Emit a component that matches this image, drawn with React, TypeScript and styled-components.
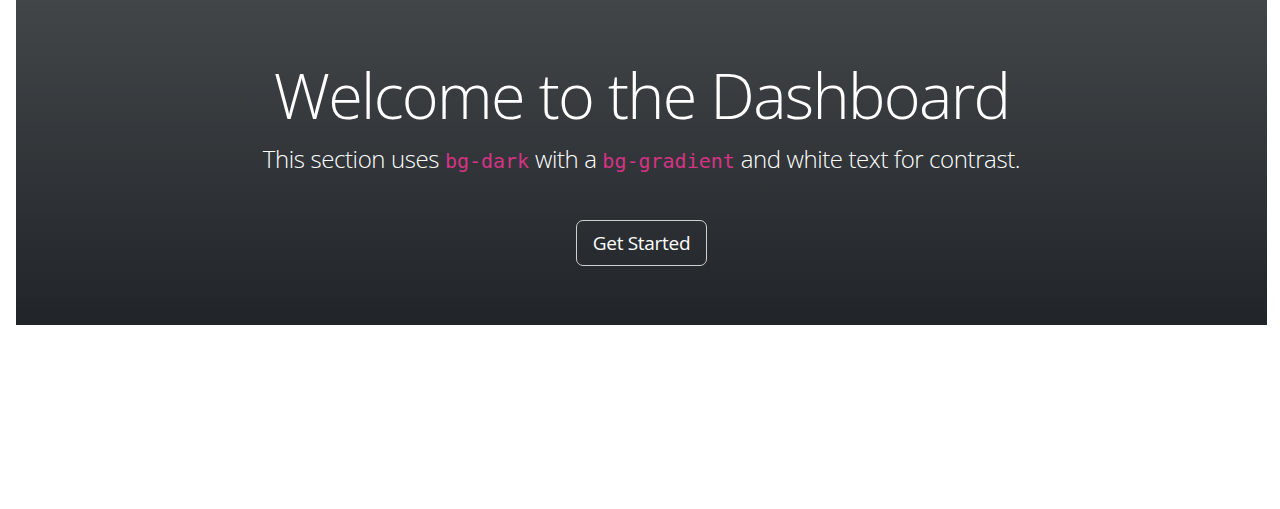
import React from "react";
import styled, { createGlobalStyle } from "styled-components";

const GlobalStyle = createGlobalStyle`
  html, body { margin: 0; padding: 0; background: #ffffff; }
  body { font-family: "Open Sans", "Noto Sans", sans-serif; }
`;

const Page = styled.div`
  padding: 0 13px 0 16px;
`;

const Hero = styled.section`
  height: 325px;
  box-sizing: border-box;
  padding-top: 57px;
  display: flex;
  flex-direction: column;
  align-items: center;
  color: #ffffff;
  background-color: #212529;
  background-image: linear-gradient(180deg, rgba(255, 255, 255, 0.15), rgba(255, 255, 255, 0));
  text-align: center;
`;

const Title = styled.h1`
  margin: 0;
  font-family: "Open Sans", sans-serif;
  font-weight: 300;
  font-size: 63px;
  line-height: 1.2;
  letter-spacing: -1.7px;
`;

const Lead = styled.p`
  margin: 8px 0 41px;
  font-family: "Open Sans", sans-serif;
  font-weight: 300;
  font-size: 24px;
  line-height: 36px;
  letter-spacing: -0.4px;
`;

const Code = styled.code`
  font-family: "DejaVu Sans Mono", "Liberation Mono", monospace;
  font-size: 20px;
  letter-spacing: 0;
  color: #d63384;
  font-weight: 500;
`;

const Button = styled.button`
  box-sizing: border-box;
  width: 131px;
  height: 46px;
  padding: 0;
  font-family: "Open Sans", sans-serif;
  font-size: 19px;
  letter-spacing: -0.3px;
  color: #ffffff;
  background: transparent;
  border: 1px solid #cfd0d1;
  border-radius: 7px;
  cursor: pointer;
`;

export default function App() {
  return (
    <>
      <GlobalStyle />
      <Page>
        <Hero>
          <Title>Welcome to the Dashboard</Title>
          <Lead>
            This section uses <Code>bg-dark</Code> with a <Code>bg-gradient</Code> and white text for contrast.
          </Lead>
          <Button>Get Started</Button>
        </Hero>
      </Page>
    </>
  );
}
